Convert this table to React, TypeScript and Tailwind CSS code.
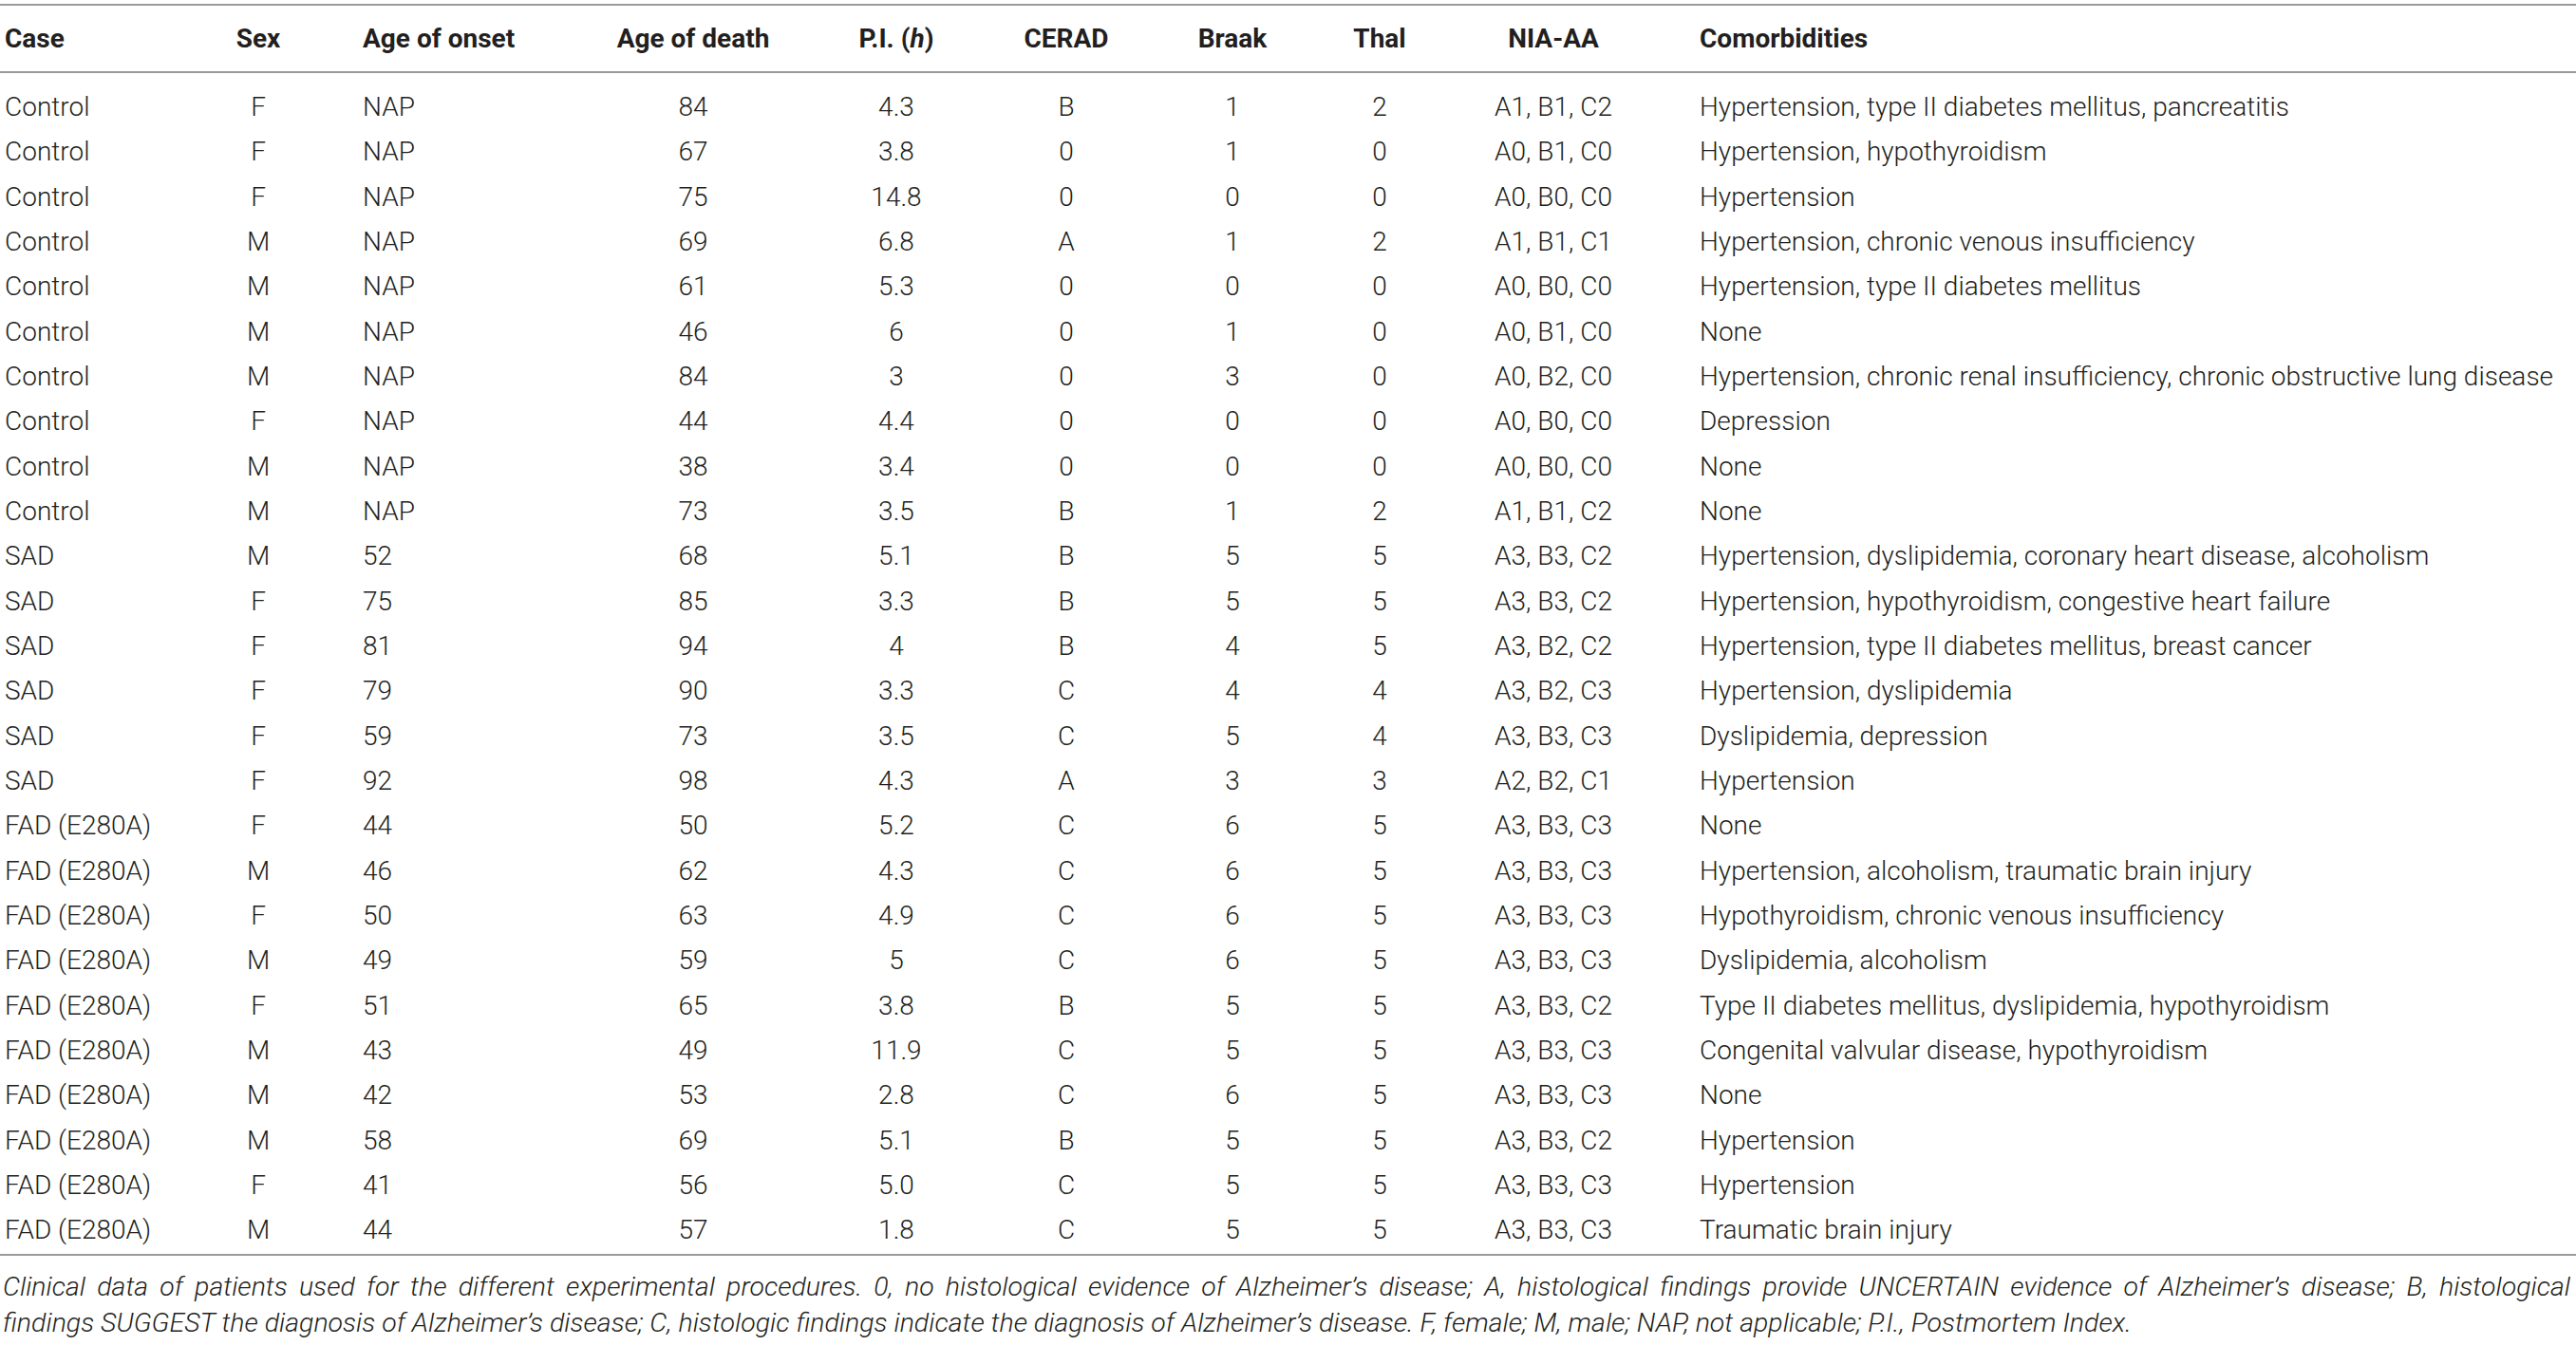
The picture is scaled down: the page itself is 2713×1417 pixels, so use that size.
import React from "react";

type Row = [string, string, string, string, string, string, string, string, string, string];

const rows: Row[] = [
  ["Control", "F", "NAP", "84", "4.3", "B", "1", "2", "A1, B1, C2", "Hypertension, type II diabetes mellitus, pancreatitis"],
  ["Control", "F", "NAP", "67", "3.8", "0", "1", "0", "A0, B1, C0", "Hypertension, hypothyroidism"],
  ["Control", "F", "NAP", "75", "14.8", "0", "0", "0", "A0, B0, C0", "Hypertension"],
  ["Control", "M", "NAP", "69", "6.8", "A", "1", "2", "A1, B1, C1", "Hypertension, chronic venous insufficiency"],
  ["Control", "M", "NAP", "61", "5.3", "0", "0", "0", "A0, B0, C0", "Hypertension, type II diabetes mellitus"],
  ["Control", "M", "NAP", "46", "6", "0", "1", "0", "A0, B1, C0", "None"],
  ["Control", "M", "NAP", "84", "3", "0", "3", "0", "A0, B2, C0", "Hypertension, chronic renal insufficiency, chronic obstructive lung disease"],
  ["Control", "F", "NAP", "44", "4.4", "0", "0", "0", "A0, B0, C0", "Depression"],
  ["Control", "M", "NAP", "38", "3.4", "0", "0", "0", "A0, B0, C0", "None"],
  ["Control", "M", "NAP", "73", "3.5", "B", "1", "2", "A1, B1, C2", "None"],
  ["SAD", "M", "52", "68", "5.1", "B", "5", "5", "A3, B3, C2", "Hypertension, dyslipidemia, coronary heart disease, alcoholism"],
  ["SAD", "F", "75", "85", "3.3", "B", "5", "5", "A3, B3, C2", "Hypertension, hypothyroidism, congestive heart failure"],
  ["SAD", "F", "81", "94", "4", "B", "4", "5", "A3, B2, C2", "Hypertension, type II diabetes mellitus, breast cancer"],
  ["SAD", "F", "79", "90", "3.3", "C", "4", "4", "A3, B2, C3", "Hypertension, dyslipidemia"],
  ["SAD", "F", "59", "73", "3.5", "C", "5", "4", "A3, B3, C3", "Dyslipidemia, depression"],
  ["SAD", "F", "92", "98", "4.3", "A", "3", "3", "A2, B2, C1", "Hypertension"],
  ["FAD (E280A)", "F", "44", "50", "5.2", "C", "6", "5", "A3, B3, C3", "None"],
  ["FAD (E280A)", "M", "46", "62", "4.3", "C", "6", "5", "A3, B3, C3", "Hypertension, alcoholism, traumatic brain injury"],
  ["FAD (E280A)", "F", "50", "63", "4.9", "C", "6", "5", "A3, B3, C3", "Hypothyroidism, chronic venous insufficiency"],
  ["FAD (E280A)", "M", "49", "59", "5", "C", "6", "5", "A3, B3, C3", "Dyslipidemia, alcoholism"],
  ["FAD (E280A)", "F", "51", "65", "3.8", "B", "5", "5", "A3, B3, C2", "Type II diabetes mellitus, dyslipidemia, hypothyroidism"],
  ["FAD (E280A)", "M", "43", "49", "11.9", "C", "5", "5", "A3, B3, C3", "Congenital valvular disease, hypothyroidism"],
  ["FAD (E280A)", "M", "42", "53", "2.8", "C", "6", "5", "A3, B3, C3", "None"],
  ["FAD (E280A)", "M", "58", "69", "5.1", "B", "5", "5", "A3, B3, C2", "Hypertension"],
  ["FAD (E280A)", "F", "41", "56", "5.0", "C", "5", "5", "A3, B3, C3", "Hypertension"],
  ["FAD (E280A)", "M", "44", "57", "1.8", "C", "5", "5", "A3, B3, C3", "Traumatic brain injury"],
];

const grid =
  "grid grid-cols-[200px_144px_258px_256px_172px_186px_164px_146px_220px_1fr] items-center";

const cellCls = [
  "pl-[5px] text-left whitespace-nowrap",
  "text-center whitespace-nowrap",
  "pl-[38px] text-left whitespace-nowrap",
  "text-center whitespace-nowrap",
  "text-center whitespace-nowrap",
  "text-center whitespace-nowrap",
  "text-center whitespace-nowrap",
  "text-center whitespace-nowrap",
  "text-center whitespace-nowrap",
  "pl-[44px] text-left whitespace-nowrap",
];

export default function App() {
  return (
    <div
      className="w-[2713px] min-h-[1417px] bg-white text-[#231f20] pt-[4px]"
      style={{ fontFamily: "Roboto, 'Liberation Sans', Arial, sans-serif" }}
    >
      <div className="border-t-2 border-[#9a9a9a]" />
      <div className={`${grid} h-[69px] text-[28px] font-bold leading-none`}>
        <div className={cellCls[0]}>Case</div>
        <div className={cellCls[1]}>Sex</div>
        <div className={cellCls[2]}>Age of onset</div>
        <div className={cellCls[3]}>Age of death</div>
        <div className={cellCls[4]}>
          P.I. (<span className="italic">h</span>)
        </div>
        <div className={cellCls[5]}>CERAD</div>
        <div className={cellCls[6]}>Braak</div>
        <div className={cellCls[7]}>Thal</div>
        <div className={cellCls[8]}>NIA-AA</div>
        <div className={cellCls[9]}>Comorbidities</div>
      </div>
      <div className="border-t-2 border-[#9a9a9a]" />
      <div className="pt-[12px] pb-[1px] text-[28px] font-light">
        {rows.map((r, i) => (
          <div key={i} className={`${grid} h-[47.33px] leading-[47.33px]`}>
            {r.map((c, j) => (
              <div key={j} className={cellCls[j]}>
                {c}
              </div>
            ))}
          </div>
        ))}
      </div>
      <div className="border-t-2 border-[#9a9a9a]" />
      <div className="mt-[14px] pl-[3px] pr-[6px] text-[28.5px] leading-[38px] italic font-light">
        <p className="text-justify [text-align-last:justify] whitespace-nowrap">
          Clinical data of patients used for the different experimental procedures. 0, no histological evidence of
          Alzheimer’s disease; A, histological findings provide UNCERTAIN evidence of Alzheimer’s disease; B,
          histological
        </p>
        <p className="text-left">
          findings SUGGEST the diagnosis of Alzheimer’s disease; C, histologic findings indicate the diagnosis of
          Alzheimer’s disease. F, female; M, male; NAP, not applicable; P.I., Postmortem Index.
        </p>
      </div>
    </div>
  );
}
